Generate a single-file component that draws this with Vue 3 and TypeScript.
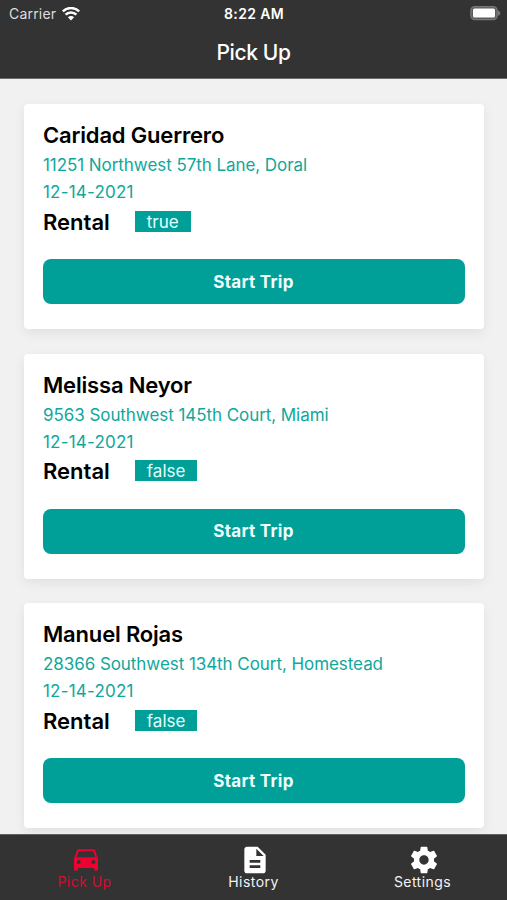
<script setup lang="ts">
interface Trip {
  name: string
  address: string
  date: string
  rental: boolean
}

interface Tab {
  label: string
  icon: string
  active?: boolean
}

const trips: Trip[] = [
  { name: 'Caridad Guerrero', address: '11251 Northwest 57th Lane, Doral', date: '12-14-2021', rental: true },
  { name: 'Melissa Neyor', address: '9563 Southwest 145th Court, Miami', date: '12-14-2021', rental: false },
  { name: 'Manuel Rojas', address: '28366 Southwest 134th Court, Homestead', date: '12-14-2021', rental: false },
]

const tabs: Tab[] = [
  {
    label: 'Pick Up',
    active: true,
    icon: 'M18.92 5.01C18.72 4.42 18.16 4 17.5 4h-11c-.66 0-1.21.42-1.42 1.01L3 11v8c0 .55.45 1 1 1h1c.55 0 1-.45 1-1v-1h12v1c0 .55.45 1 1 1h1c.55 0 1-.45 1-1v-8l-2.08-5.99zM6.5 15c-.83 0-1.5-.67-1.5-1.5S5.67 12 6.5 12s1.5.67 1.5 1.5S7.33 15 6.5 15zm11 0c-.83 0-1.5-.67-1.5-1.5s.67-1.5 1.5-1.5 1.5.67 1.5 1.5-.67 1.5-1.5 1.5zM5 10l1.5-4.5h11L19 10H5z',
  },
  {
    label: 'History',
    icon: 'M14 2H6c-1.1 0-1.99.9-1.99 2L4 20c0 1.1.89 2 1.99 2H18c1.1 0 2-.9 2-2V8l-6-6zm2 16H8v-2h8v2zm0-4H8v-2h8v2zm-3-5V3.5L18.5 9H13z',
  },
  {
    label: 'Settings',
    icon: 'M19.43 12.98c.04-.32.07-.64.07-.98s-.03-.66-.07-.98l2.11-1.65c.19-.15.24-.42.12-.64l-2-3.46c-.12-.22-.39-.3-.61-.22l-2.49 1c-.52-.4-1.08-.73-1.69-.98l-.38-2.65C14.46 2.18 14.25 2 14 2h-4c-.25 0-.46.18-.49.42l-.38 2.65c-.61.25-1.17.59-1.69.98l-2.49-1c-.23-.09-.49 0-.61.22l-2 3.46c-.13.22-.07.49.12.64l2.11 1.65c-.04.32-.07.65-.07.98s.03.66.07.98l-2.11 1.65c-.19.15-.24.42-.12.64l2 3.46c.12.22.39.3.61.22l2.49-1c.52.4 1.08.73 1.69.98l.38 2.65c.03.24.24.42.49.42h4c.25 0 .46-.18.49-.42l.38-2.65c.61-.25 1.17-.59 1.69-.98l2.49 1c.23.09.49 0 .61-.22l2-3.46c.12-.22.07-.49-.12-.64l-2.11-1.65zM12 15.5c-1.93 0-3.5-1.57-3.5-3.5s1.57-3.5 3.5-3.5 3.5 1.57 3.5 3.5-1.57 3.5-3.5 3.5z',
  },
]
</script>

<template>
  <div class="screen">
    <header class="header">
      <div class="status">
        <div class="carrier">
          <span>Carrier</span>
          <svg class="wifi" viewBox="0 0 18 14" width="18" height="14">
            <path d="M.8 4.4a11.7 11.7 0 0 1 16.4 0" />
            <path d="M3.6 7.6a7.7 7.7 0 0 1 10.8 0" />
            <path class="dot" d="M5.9 10.2a4.4 4.4 0 0 1 6.2 0L9 13.5z" />
          </svg>
        </div>
        <span class="time">8:22 AM</span>
        <svg class="battery" viewBox="0 0 31 15" width="31" height="15">
          <rect class="shell" x=".9" y=".6" width="26.2" height="13" rx="4" />
          <rect class="charge" x="3" y="2.6" width="22" height="9" rx="1.5" />
          <path class="cap" d="M28 4.4c3 1.4 3 4 0 5.4z" />
        </svg>
      </div>
      <h1 class="title">Pick Up</h1>
    </header>

    <main class="list">
      <article v-for="trip in trips" :key="trip.name" class="card">
        <h2 class="name">{{ trip.name }}</h2>
        <p class="detail">{{ trip.address }}</p>
        <p class="detail date">{{ trip.date }}</p>
        <div class="rental">
          <span class="rental-label">Rental</span>
          <span class="badge">{{ trip.rental }}</span>
        </div>
        <button class="start" type="button">Start Trip</button>
      </article>
    </main>

    <nav class="tabs">
      <a v-for="tab in tabs" :key="tab.label" class="tab" :class="{ active: tab.active }">
        <svg viewBox="0 0 24 24" width="32" height="32"><path :d="tab.icon" /></svg>
        <span>{{ tab.label }}</span>
      </a>
    </nav>
  </div>
</template>

<style>
body {
  margin: 0;
}
</style>

<style scoped>
.screen {
  display: flex;
  flex-direction: column;
  height: 900px;
  overflow: hidden;
  background: #f1f1f1;
  font-family: Inter, 'Liberation Sans', sans-serif;
  color: #000;
}
.header {
  flex: none;
  box-sizing: border-box;
  height: 79px;
  background: #333;
  border-bottom: 1px solid #6c6c6c;
  color: #fff;
}
.status {
  display: grid;
  grid-template-columns: 1fr auto 1fr;
  align-items: center;
  height: 27px;
  padding: 0 6px 0 9px;
  font-size: 14px;
  line-height: 27px;
}
.carrier {
  display: flex;
  align-items: center;
  gap: 6px;
  color: #dedede;
  letter-spacing: 0.2px;
}
.wifi {
  fill: none;
  stroke: #fff;
  stroke-width: 2.5;
}
.wifi .dot {
  fill: #fff;
  stroke: none;
}
.time {
  margin-right: 2px;
  font-weight: 600;
  letter-spacing: 0.35px;
}
.battery {
  justify-self: end;
}
.shell {
  fill: #5c5c5c;
  stroke: #787878;
  stroke-width: 1.4;
}
.charge {
  fill: #fff;
}
.cap {
  fill: #787878;
}
.title {
  margin: 0;
  font-size: 21px;
  font-weight: 550;
  letter-spacing: -0.4px;
  line-height: 52px;
  text-align: center;
}
.list {
  flex: 1;
  min-height: 0;
  display: flex;
  flex-direction: column;
  gap: 24.5px;
  padding: 25px 23px 0 24px;
}
.card {
  flex: none;
  box-sizing: border-box;
  height: 225px;
  padding: 17px 19px 0;
  background: #fff;
  border-radius: 4px;
  box-shadow: 0 4px 12px rgba(0, 0, 0, 0.07);
}
.name {
  margin: 0;
  font-size: 22px;
  font-weight: 600;
  line-height: 28px;
  letter-spacing: -0.18px;
}
.detail {
  margin: 3px 0 0;
  font-size: 17px;
  line-height: 27px;
  letter-spacing: -0.06px;
  color: #10a79c;
  white-space: nowrap;
}
.date {
  margin-top: 0;
  letter-spacing: 0.2px;
}
.rental {
  display: flex;
  align-items: center;
  gap: 25px;
  height: 32px;
  margin-top: -1px;
}
.rental-label {
  padding-top: 1px;
  font-size: 22px;
  font-weight: 600;
}
.badge {
  box-sizing: border-box;
  height: 21px;
  padding: 1px 12px 0;
  background: #00a099;
  color: #e4ffff;
  font-size: 17px;
  line-height: 21px;
}
.start {
  display: block;
  width: 100%;
  height: 45px;
  margin-top: 22px;
  padding: 0 1px 0 0;
  border: 0;
  border-radius: 8px;
  background: #00a099;
  color: #efffff;
  font: 650 17px Inter, 'Liberation Sans', sans-serif;
  letter-spacing: 0.3px;
}
.tabs {
  flex: none;
  box-sizing: border-box;
  display: grid;
  grid-template-columns: repeat(3, 1fr);
  height: 66px;
  border-top: 1px solid #606060;
  background: #333;
}
.tab {
  display: flex;
  flex-direction: column;
  align-items: center;
  padding-top: 9px;
  color: #f2f2f2;
  font-size: 14px;
  line-height: 16px;
  letter-spacing: 0.45px;
}
.tab svg {
  fill: #fff;
  margin: 0 0 -2px 2px;
}
.tab.active {
  color: #d00e34;
}
.tab.active svg {
  fill: #f00030;
}
</style>
